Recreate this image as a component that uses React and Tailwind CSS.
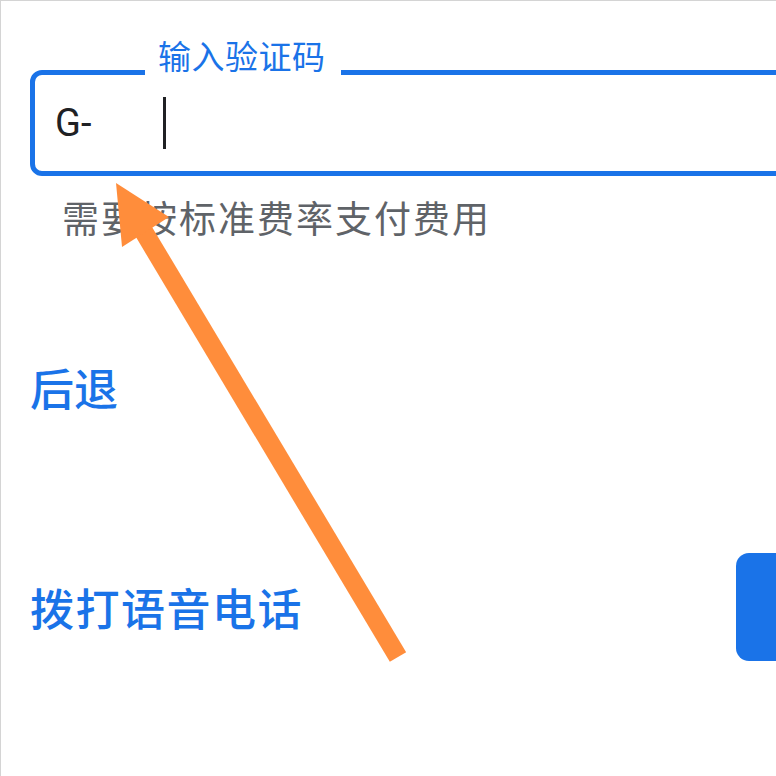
export default function App() {
  return (
    <div className="relative w-[776px] h-[776px] overflow-hidden bg-white border-t border-l border-[#d4d4d4] font-['Noto_Sans_CJK_SC',sans-serif]">
      <div className="pt-[69px] pl-[29px]">
        {/* outlined code field */}
        <div className="relative flex items-center h-[106px] w-[800px] border-[5px] border-[#1a73e8] rounded-[12px] pl-[20px]">
          <span className="absolute left-[110px] top-[-42px] bg-white pl-[13px] pr-[15px] text-[33px] leading-[44px] tracking-[0.5px] text-[#1a73e8]">
            输入验证码
          </span>
          <span className="w-[108px] shrink-0 font-['Roboto',sans-serif] text-[38px] text-[#202124]">G-</span>
          <span className="w-[3px] h-[52px] bg-[#202124]" />
        </div>
        <div className="mt-[19px] pl-[32px] text-[37px] leading-[44px] tracking-[2px] text-[#5f6368]">需要按标准费率支付费用</div>

        <div className="mt-[122px] text-[44px] leading-[52px] font-medium text-[#1a73e8]">后退</div>

        <div className="mt-[140px] flex items-center justify-between w-[826px]">
          <span className="text-[44px] leading-[52px] tracking-[1.5px] font-medium text-[#1a73e8]">拨打语音电话</span>
          <div className="w-[120px] h-[108px] rounded-[13px] bg-[#1a73e8]" />
        </div>
      </div>

      {/* annotation arrow */}
      <svg className="absolute left-0 top-0 pointer-events-none" width="776" height="776" viewBox="0 0 776 776">
        <line x1="397" y1="656" x2="140" y2="226" stroke="#ff8d3b" strokeWidth="19" />
        <polygon points="115,182 168,216 121,246" fill="#ff8d3b" />
      </svg>
    </div>
  );
}
